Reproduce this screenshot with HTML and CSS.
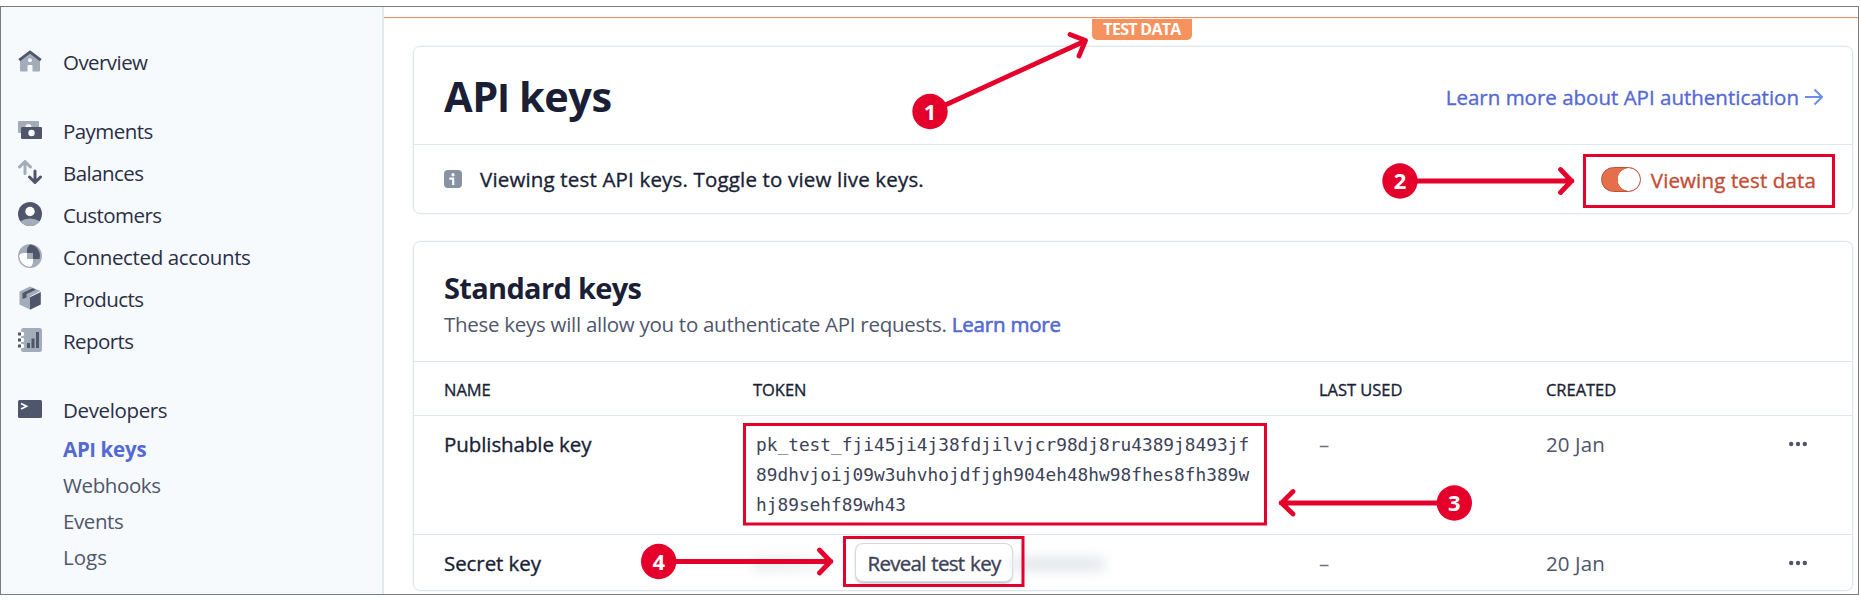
FILE: index.html
```html
<!DOCTYPE html>
<html lang="en">
<head>
<meta charset="utf-8">
<title>API keys</title>
<link rel="stylesheet" href="styles.css">
</head>
<body>
<div class="window">
  <nav class="sidebar">
    <a class="item"><svg class="icon" viewBox="0 0 24 24"><path fill="#a3acb9" fill-rule="evenodd" d="M2 11 12 3l10 8v10.500a1 1 0 0 1-1 1h-6.500V17a1 1 0 0 0-1-1h-3a1 1 0 0 0-1 1v5.500H3a1 1 0 0 1-1-1zM12 9.200a2 2 0 1 0 0 4 2 2 0 0 0 0-4z"/><path fill="none" stroke="#4f566b" stroke-width="2.800" d="M1.200 11.200 12 3l10.800 8.200"/></svg><span>Overview</span></a>
    <a class="item gap"><svg class="icon" viewBox="0 0 24 24"><path fill="#a3acb9" d="M1 3h19a1 1 0 0 1 1 1v5H3v6H1a1 1 0 0 1-1-1V4a1 1 0 0 1 1-1z"/><path fill="#f7fafc" d="M7.500 9a3 3 0 0 1 6 0z"/><rect x="3" y="9" width="21" height="12" rx="1" fill="#4f566b"/><circle cx="13.500" cy="15" r="3.200" fill="#f7fafc"/></svg><span>Payments</span></a>
    <a class="item"><svg class="icon" viewBox="0 0 24 24"><g fill="none" stroke-width="3" stroke-linecap="round" stroke-linejoin="round"><path stroke="#a3acb9" d="M7 13.500V2M1.500 7 7 1.500 12.500 7"/><path stroke="#4f566b" d="M17 11v11M11.500 17l5.500 5.500 5.500-5.500"/></g></svg><span>Balances</span></a>
    <a class="item"><svg class="icon" viewBox="0 0 24 24"><circle cx="12" cy="12" r="12" fill="#4f566b"/><path fill="#a3acb9" d="M2.500 19.300Q6.500 16.500 12 16.500t9.500 2.800A12 12 0 0 1 2.500 19.300z"/><circle cx="12" cy="9.500" r="4.700" fill="#fff"/></svg><span>Customers</span></a>
    <a class="item wide"><svg class="icon" viewBox="0 0 24 24"><circle cx="12" cy="12" r="12" fill="#a3acb9"/><path fill="#4f566b" d="M12.500.500A11.600 11.600 0 0 1 21.500 15H15V9H9V6Q9.500 2 12.500.500z"/><path fill="#fff" d="M1.200 12Q1.500 9.500 5 9h4v6h6v3q-.5 4-3 4.800A11 11 0 0 1 1.200 12z"/></svg><span>Connected accounts</span></a>
    <a class="item"><svg class="icon" viewBox="0 0 24 24"><path fill="#a3acb9" d="M12 .500 22.500 5 12 10.500v13L1.500 18.500V5.500z"/><path fill="#4f566b" d="M22.800 6v12.500L12 23.800V11.200zM14.500 2.200l3.500 1.500L8.500 8v3.500L4.500 13V7z"/></svg><span>Products</span></a>
    <a class="item"><svg class="icon" viewBox="0 0 24 24"><rect x="3" width="21" height="24" rx="2.500" fill="#a3acb9"/><g fill="#fff"><circle cx="4" cy="6" r="2.300"/><circle cx="4" cy="12" r="2.300"/><circle cx="4" cy="18" r="2.300"/></g><path fill="#4f566b" d="M0 4.500h3v3H0zM0 10.500h3v3H0zM0 16.500h3v3H0zM9 15h3v5H9zM13.500 10.500h3V20h-3zM18 4h3v16h-3z"/></svg><span>Reports</span></a>
    <a class="item wide gap"><svg class="icon" viewBox="0 0 24 24"><rect y="3" width="24" height="18" rx="1.500" fill="#4f566b"/><path fill="none" stroke="#fff" stroke-width="1.800" d="m3 6.500 5.500 2.700L3 12"/></svg><span>Developers</span></a>
    <a class="sub active"><span>AP<b class="plain">I</b> keys</span></a>
    <a class="sub"><span>Webhooks</span></a>
    <a class="sub"><span>Events</span></a>
    <a class="sub logs"><span>Logs</span></a>
  </nav>
  <main class="main">
    <div class="testbar"><span class="badge">TEST DATA</span></div>
    <section class="card">
      <header class="card-head">
        <h1>AP<b class="plain">I</b> keys</h1>
        <a class="link"><span>Learn more about API authentication</span><svg class="arrow" viewBox="0 0 18 18"><path d="M0 9h16.500M9.500 1.500 17 9l-7.500 7.500"/></svg></a>
      </header>
      <div class="notice">
        <svg class="info" viewBox="0 0 18 18"><rect width="18" height="18" rx="4" fill="#8792a2"/><circle cx="9" cy="4.700" r="1.700" fill="#fff"/><path fill="none" stroke="#fff" stroke-width="2.200" d="M5.300 8.700H9.200V15"/></svg>
        <span class="notice-text">Viewing test API keys. Toggle to view live keys.</span>
        <span class="toggle"></span>
        <span class="toggle-label">Viewing test data</span>
      </div>
    </section>
    <section class="card keys">
      <header class="keys-head">
        <h2>Standard keys</h2>
        <p><span>These keys will allow you to authenticate API requests.</span> <a class="more">Learn more</a></p>
      </header>
      <div class="row head"><span>NAME</span><span>TOKEN</span><span>LAST USED</span><span>CREATED</span></div>
      <div class="row publishable">
        <span class="name">Publishable key</span>
        <span class="token">pk_test_fji45ji4j38fdjilvjcr98dj8ru4389j8493jf<br>89dhvjoij09w3uhvhojdfjgh904eh48hw98fhes8fh389w<br>hj89sehf89wh43</span>
        <span class="dash">–</span><span class="date">20 Jan</span>
        <svg class="dots" viewBox="0 0 18 6"><circle cx="2.200" cy="3" r="2.200"/><circle cx="9" cy="3" r="2.200"/><circle cx="15.800" cy="3" r="2.200"/></svg>
      </div>
      <div class="row secret">
        <span class="name">Secret key</span>
        <span class="hidden-token"><i class="smudge left"></i><button class="reveal">Reveal test key</button><i class="smudge right"></i></span>
        <span class="dash">–</span><span class="date">20 Jan</span>
        <svg class="dots" viewBox="0 0 18 6"><circle cx="2.200" cy="3" r="2.200"/><circle cx="9" cy="3" r="2.200"/><circle cx="15.800" cy="3" r="2.200"/></svg>
      </div>
    </section>
  </main>
</div>
<svg class="notes" viewBox="0 0 1860 601">
  <g class="lines">
    <path d="M930 112 1085 41M1070 34.500 1085.500 40.500 1079 56"/>
    <path d="M1400 181H1572M1560.500 169.500 1571.500 181 1560.500 192.500"/>
    <path d="M1454 503H1281M1293 491.500 1281.500 503 1293 514"/>
    <path d="M658.500 561.500H831M819.500 550 830.500 561.500 819.500 573"/>
  </g>
  <g class="boxes">
    <rect x="1584.500" y="155.500" width="249" height="51"/>
    <rect x="744.500" y="424.500" width="521" height="99.500"/>
    <rect x="844.500" y="537.500" width="178.500" height="48"/>
  </g>
  <g class="pins"><circle cx="930" cy="111.500" r="17.700"/><circle cx="1400" cy="181" r="17.700"/><circle cx="1454.300" cy="503" r="17.700"/><circle cx="658.700" cy="561.500" r="17.700"/></g>
  <g class="nums"><text x="930" y="119.500">1</text><text x="1400" y="189">2</text><text x="1454.300" y="511">3</text><text x="658.700" y="569.500">4</text></g>
</svg>
</body>
</html>
```
FILE: styles.css
```css
* { box-sizing: border-box; }
body { margin: 0; width: 1860px; height: 601px; overflow: hidden; position: relative; background: #fff; color: #1a1f36; font-family: "Open Sans", "Noto Sans", sans-serif; font-size: 20.5px; }
h1, h2, p { margin: 0; }
span, a { white-space: nowrap; }
.plain { font-family: "Liberation Sans", sans-serif; font-weight: 700; }
.window { display: flex; width: 1859px; height: 589px; margin-top: 6px; border: 1px solid #7c7c7c; }
.sidebar { width: 383px; padding-top: 34px; background: #f6fafd; border-right: 2px solid #e3e8ee; }
.item { display: flex; align-items: center; height: 42px; padding-left: 17px; gap: 21px; line-height: 42px; color: #2a2f45; letter-spacing: -.56px; }
.item.wide { letter-spacing: -.36px; }
.item.gap { margin-top: 27px; }
.icon { width: 24px; height: 24px; margin-top: -2px; flex: none; }
.sub { display: block; height: 36px; line-height: 36px; padding-left: 62px; color: #4f566b; letter-spacing: -.4px; }
.sub.active { color: #5469d4; font-weight: 700; letter-spacing: -.15px; }
.sub.logs { letter-spacing: 0; }
.main { flex: 1; display: flex; flex-direction: column; padding: 10px 5px 0 0; }
.testbar { border-top: 1px solid #ee8c60; box-shadow: inset 0 1px #fdf3ee; height: 29px; margin-right: -5px; display: flex; }
.badge { margin: 1px 0 0 708px; width: 100px; height: 21px; border-radius: 0 0 5px 5px; background: #f5925e; color: #fff; font-weight: 700; font-size: 16px; line-height: 21px; letter-spacing: -.7px; text-align: center; }
.card { margin-left: 29px; height: 168px; border: 1px solid #e0e6ed; border-radius: 7px; flex: none; box-shadow: 0 0 0 .5px #e0e6ed80; }
.card-head { height: 98px; display: flex; align-items: center; justify-content: space-between; padding: 1px 29px 0 30px; border-bottom: 1px solid #e0e6ed; }
h1 { font-size: 41.5px; line-height: 60px; font-weight: 700; letter-spacing: -.5px; padding-top: 2px; }
.link, .notice, .head, .name, .reveal, .more { -webkit-text-stroke: .35px currentColor; }
.link { display: flex; align-items: center; gap: 6px; color: #5469d4; padding-top: 1px; }
.arrow { width: 18px; height: 18px; fill: none; stroke: #6c8eef; stroke-width: 2; }
.notice { height: 68px; display: flex; align-items: center; padding: 0 36px 0 30px; }
.notice-text { letter-spacing: .17px; }
.info { width: 18px; height: 18px; margin-right: 18px; }
.toggle { margin-left: auto; width: 40px; height: 25px; border-radius: 13px; border: 1px solid #b8503a; background: radial-gradient(circle at 27px 50%, #fff 11px, #e56f4a 11.500px); margin-right: 10px; }
.toggle-label { color: #c44c34; letter-spacing: .14px; padding-top: 1px; }
.keys { margin-top: 27px; height: 350px; }
.keys-head { height: 120px; padding: 25px 30px 0; border-bottom: 1px solid #e0e6ed; }
h2 { font-size: 29px; line-height: 42px; letter-spacing: -.68px; }
p { color: #4f566b; line-height: 30px; letter-spacing: -.28px; }
.more { color: #5469d4; font-weight: 400; letter-spacing: -.18px; -webkit-text-stroke-width: .6px; }
.row { display: grid; grid-template-columns: 309px 566px 227px 243px 1fr; padding-left: 30px; border-bottom: 1px solid #e0e6ed; line-height: 30px; }
.row:last-child { border-bottom: 0; }
.head { height: 54px; align-items: center; font-size: 16.500px; padding-top: 3px; letter-spacing: -.04px; }
.publishable { height: 119px; padding-top: 13px; }
.token { font-family: "DejaVu Sans Mono", monospace; font-size: 17.800px; padding: 1px 0 0 3px; letter-spacing: .015px; color: #3c4257; }
.name { letter-spacing: -.08px; }
.dash { color: #697386; }
.date { color: #4f566b; letter-spacing: .1px; }
.dots { width: 18px; height: 6px; margin-top: 12px; fill: #4f566b; }
.secret { padding-top: 13px; height: 54px; }
.hidden-token { display: flex; margin-top: -4px; height: 40px; }
.smudge { width: 75px; height: 14px; margin-top: 13px; background: linear-gradient(90deg, #c8cdd6, #e6e8ed); filter: blur(6px); opacity: .4; }
.smudge.right { width: 92px; background: #e4e7ec; opacity: 1; }
.reveal { width: 156px; height: 37px; margin-left: 28px; border: 0; border-radius: 7px; background: #fff; box-shadow: 0 0 0 1px #d5dae2, 0 2px 3px #3c425770; color: #3c4257; font: 400 20.500px/36px "Open Sans", sans-serif; letter-spacing: -.7px; word-spacing: 1px; padding: 0; position: relative; }
.notes { position: absolute; left: 0; top: 0; width: 1860px; height: 601px; }
.lines { fill: none; stroke: #e4002b; stroke-width: 4.800; stroke-linecap: round; stroke-linejoin: round; }
.boxes { fill: none; stroke: #e4002b; stroke-width: 3; }
.pins { fill: #e4002b; }
.nums { fill: #fff; font: 700 22px "Open Sans", sans-serif; text-anchor: middle; }
```
